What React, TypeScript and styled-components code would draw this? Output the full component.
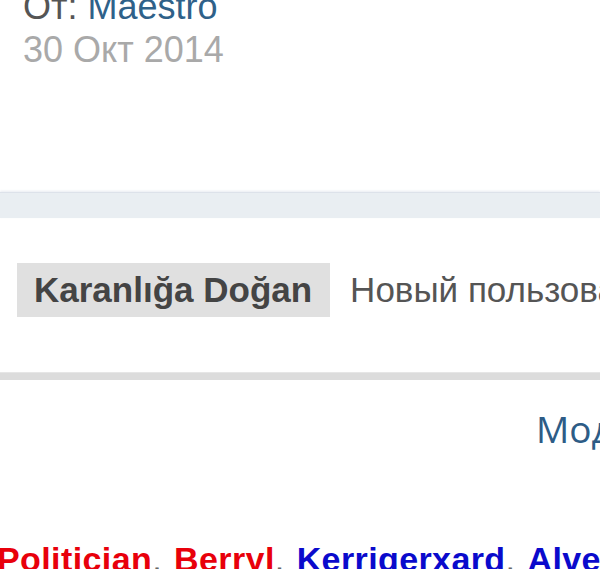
import React from "react";
import styled, { createGlobalStyle } from "styled-components";

const Global = createGlobalStyle`
  html, body {
    margin: 0;
    padding: 0;
    background: #ffffff;
    overflow: hidden;
  }
  body {
    font-family: "Liberation Sans", Arial, "Noto Sans", sans-serif;
  }
`;

const Page = styled.div`
  width: 600px;
  overflow: hidden;
  display: flex;
  flex-direction: column;

  & > * {
    flex-shrink: 0;
  }
`;

const Header = styled.div`
  margin-top: -15px;
  padding-left: 23px;
  font-size: 36px;
  line-height: 43px;
  white-space: nowrap;
`;

const FromLine = styled.div`
  color: #555555;
`;

const UserLink = styled.a`
  color: #2f6189;
  text-decoration: none;
`;

const DateLine = styled.div`
  color: #a9a9a9;
`;

const Band = styled.div`
  margin-top: 121px;
  height: 25px;
  background: #e9eef2;
  border-top: 1px solid #dde2ea;
  box-shadow: 0 -1px 2px rgba(200, 205, 220, 0.4);
`;

const PostRow = styled.div`
  margin-top: 45px;
  padding-left: 17px;
  display: flex;
  align-items: center;
  gap: 20px;
  white-space: nowrap;
`;

const NameTag = styled.span`
  background: #e0e0e0;
  padding: 6px 18px 6px 17px;
  font-size: 35px;
  line-height: 42px;
  font-weight: 700;
  color: #444444;
`;

const RoleText = styled.span`
  font-size: 35px;
  line-height: 42px;
  color: #555555;
`;

const Divider = styled.div`
  margin-top: 55px;
  height: 8px;
  background: #dcdcdc;
  border-top: 1px solid #e6e6e6;
  box-sizing: border-box;
`;

const ModRow = styled.div`
  margin-top: 27px;
  padding-left: 536px;
  white-space: nowrap;
  font-family: "Open Sans", "Noto Sans", sans-serif;
  font-size: 37px;
  line-height: 44px;
  color: #2d5c86;
`;

const Names = styled.div`
  margin-top: 88px;
  margin-left: -3px;
  white-space: nowrap;
  font-size: 34px;
  line-height: 40px;
  font-weight: 700;
`;

const Member = styled.span<{ $tone: "red" | "blue" }>`
  color: ${(p) => (p.$tone === "red" ? "#e8000b" : "#0a0acc")};
  letter-spacing: 0.4px;
`;

const Sep = styled.span`
  color: #666666;
  font-weight: 400;
  margin-right: 3px;
`;

const members: { name: string; tone: "red" | "blue" }[] = [
  { name: "Politician", tone: "red" },
  { name: "Berryl", tone: "red" },
  { name: "Kerrigerxard", tone: "blue" },
  { name: "Alverado", tone: "blue" },
];

export default function App() {
  return (
    <>
      <Global />
      <Page>
        <Header>
          <FromLine>
            От: <UserLink href="#">Maestro</UserLink>
          </FromLine>
          <DateLine>30 Окт 2014</DateLine>
        </Header>
        <Band />
        <PostRow>
          <NameTag>Karanlığa Doğan</NameTag>
          <RoleText>Новый пользователь</RoleText>
        </PostRow>
        <Divider />
        <ModRow>Модерировать</ModRow>
        <Names>
          {members.map((m, i) => (
            <React.Fragment key={m.name}>
              {i > 0 && <Sep>, </Sep>}
              <Member $tone={m.tone}>{m.name}</Member>
            </React.Fragment>
          ))}
        </Names>
      </Page>
    </>
  );
}
